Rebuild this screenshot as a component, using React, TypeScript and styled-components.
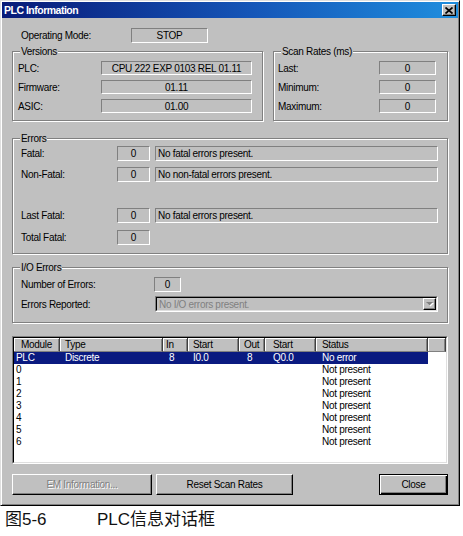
import React from 'react';
import styled, { createGlobalStyle, css } from 'styled-components';

const GlobalStyle = createGlobalStyle`
  html, body {
    margin: 0;
    padding: 0;
    background: #fff;
  }
`;

const raised = css`
  box-sizing: border-box;
  background: #c0c0c0;
  border: 1px solid;
  border-color: #fff #000 #000 #fff;
  box-shadow: inset -1px -1px #808080;
`;

const Page = styled.div`
  display: flex;
  flex-direction: column;
  width: 463px;
`;

const Window = styled.div`
  box-sizing: border-box;
  width: 460px;
  height: 506px;
  padding: 1px;
  display: flex;
  flex-direction: column;
  background: #c0c0c0;
  border: 1px solid;
  border-color: #dfdfdf #000 #000 #dfdfdf;
  box-shadow: inset 1px 1px #fff, inset -1px -1px #808080;
  font-family: "Liberation Sans", Arial, sans-serif;
  font-size: 10px;
  letter-spacing: -0.3px;
  color: #000;
`;

const TitleBar = styled.div`
  flex: none;
  height: 16px;
  display: flex;
  align-items: center;
  justify-content: space-between;
  padding: 0 2px 0 2px;
  background: linear-gradient(90deg, #081a78 0%, #1556b8 55%, #1f8ede 100%);
`;

const TitleText = styled.span`
  color: #fff;
  font-weight: bold;
  font-size: 10.5px;
  letter-spacing: -0.5px;
`;

const TitleClose = styled.div`
  ${raised};
  width: 14px;
  height: 12px;
  display: flex;
  align-items: center;
  justify-content: center;
`;

const Body = styled.div`
  flex: 1;
  display: flex;
  flex-direction: column;
  padding: 0 10px;
`;

const Row = styled.div<{ $top: number; $h?: number }>`
  display: flex;
  align-items: center;
  margin-top: ${(p) => p.$top}px;
  height: ${(p) => p.$h ?? 15}px;
`;

const Label = styled.div<{ $w: number; $pl: number }>`
  flex: none;
  box-sizing: border-box;
  width: ${(p) => p.$w}px;
  padding-left: ${(p) => p.$pl}px;
  white-space: nowrap;
`;

const Field = styled.div<{ $w: number; $left?: boolean; $ml?: number }>`
  flex: none;
  box-sizing: border-box;
  width: ${(p) => p.$w}px;
  height: 100%;
  margin-left: ${(p) => p.$ml ?? 0}px;
  padding: 0 2px;
  display: flex;
  align-items: center;
  justify-content: ${(p) => (p.$left ? 'flex-start' : 'center')};
  border: 1px solid;
  border-color: #808080 #fff #fff #808080;
  white-space: nowrap;
  overflow: hidden;
`;

const TopRow = styled.div`
  display: flex;
  gap: 10px;
  margin-top: 8px;
`;

const Group = styled.div<{ $w?: number; $top?: number; $pb: number }>`
  box-sizing: border-box;
  flex: none;
  width: ${(p) => (p.$w ? `${p.$w}px` : '100%')};
  margin-top: ${(p) => p.$top ?? 0}px;
  padding-bottom: ${(p) => p.$pb}px;
  border: 1px solid #808080;
  box-shadow: inset 1px 1px #fff, 1px 1px #fff;
`;

const GroupTitle = styled.div`
  width: fit-content;
  height: 13px;
  line-height: 13px;
  margin: -7px 0 0 7px;
  padding: 0 1px;
  background: #c0c0c0;
`;

const Combo = styled.div`
  flex: none;
  box-sizing: border-box;
  width: 283px;
  height: 100%;
  margin-left: 1px;
  border: 1px solid;
  border-color: #808080 #fff #fff #808080;
`;

const ComboInner = styled.div`
  box-sizing: border-box;
  height: 100%;
  display: flex;
  align-items: center;
  border: 1px solid;
  border-color: #000 #dfdfdf #dfdfdf #000;
  color: #808080;
`;

const ComboText = styled.span`
  flex: 1;
  padding-left: 2px;
`;

const DropButton = styled.div`
  ${raised};
  width: 13px;
  height: 12px;
  display: flex;
  align-items: center;
  justify-content: center;
`;

const ListFrame = styled.div`
  box-sizing: border-box;
  height: 128px;
  margin-top: 13px;
  border: 1px solid;
  border-color: #808080 #fff #fff #808080;
`;

const ListInner = styled.div`
  box-sizing: border-box;
  height: 100%;
  background: #fff;
  border: 1px solid;
  border-color: #000 #dfdfdf #dfdfdf #000;
  overflow: hidden;
`;

const cols = '46px 103px 25px 51px 26px 51px 112px 1fr';

const HeaderRow = styled.div`
  display: grid;
  grid-template-columns: ${cols};
  height: 14px;
`;

const HeaderCell = styled.div<{ $pl: number }>`
  box-sizing: border-box;
  height: 14px;
  line-height: 13px;
  padding-left: ${(p) => p.$pl}px;
  background: #c0c0c0;
  border-right: 1px solid #404040;
  border-bottom: 1px solid #808080;
  box-shadow: inset 1px 1px #fff, inset -1px 0 #808080;
  white-space: nowrap;
`;

const DataRow = styled.div`
  display: grid;
  grid-template-columns: ${cols};
  height: 12px;
  line-height: 12px;
`;

const Cell = styled.div<{ $sel?: boolean; $pl: number }>`
  padding-left: ${(p) => p.$pl}px;
  white-space: nowrap;
  overflow: hidden;
  background: ${(p) => (p.$sel ? '#0a1a80' : 'transparent')};
  color: ${(p) => (p.$sel ? '#fff' : '#000')};
`;

const ButtonRow = styled.div`
  display: flex;
  gap: 4px;
  margin-top: 10px;
`;

const Button = styled.button<{ $w: number; $default?: boolean }>`
  ${raised};
  width: ${(p) => p.$w}px;
  height: 21px;
  padding: 0;
  font: inherit;
  letter-spacing: inherit;
  color: #000;
  margin-left: ${(p) => (p.$default ? 'auto' : '0')};
  &:disabled {
    color: #808080;
    text-shadow: 1px 1px #fff;
  }
  ${(p) =>
    p.$default &&
    css`
      border-color: #000;
      box-shadow: inset 1px 1px #fff, inset -1px -1px #000, inset -2px -2px #808080;
    `}
`;

const Figure = styled.div`
  display: flex;
  margin-top: 4px;
  padding-left: 5px;
  font-family: "Liberation Sans", "Noto Sans CJK SC", sans-serif;
  font-size: 17px;
  line-height: 20px;
  color: #111;
`;

const FigureNo = styled.span`
  width: 92px;
`;

const columns = [
  { title: 'Module', hp: 7, rp: 2 },
  { title: 'Type', hp: 5, rp: 5 },
  { title: 'In', hp: 3, rp: 6 },
  { title: 'Start', hp: 5, rp: 5 },
  { title: 'Out', hp: 5, rp: 8 },
  { title: 'Start', hp: 8, rp: 8 },
  { title: 'Status', hp: 6, rp: 6 },
  { title: '', hp: 0, rp: 0 },
];

const modules: { cells: string[]; sel?: boolean }[] = [
  { cells: ['PLC', 'Discrete', '8', 'I0.0', '8', 'Q0.0', 'No error'], sel: true },
  ...['0', '1', '2', '3', '4', '5', '6'].map((m) => ({
    cells: [m, '', '', '', '', '', 'Not present'],
  })),
];

const CloseGlyph = () => (
  <svg width="8" height="7" viewBox="0 0 8 7">
    <path d="M0.5 0.5 L7.5 6.5 M7.5 0.5 L0.5 6.5" stroke="#000" strokeWidth="1.7" />
  </svg>
);

const DownArrow = () => (
  <svg width="8" height="5" viewBox="0 0 8 5">
    <polygon points="1,1 8,1 4.5,4.5" fill="#fff" />
    <polygon points="0,0 7,0 3.5,3.5" fill="#808080" />
  </svg>
);

const App = () => {
  return (
    <Page>
      <GlobalStyle />
      <Window>
        <TitleBar>
          <TitleText>PLC Information</TitleText>
          <TitleClose>
            <CloseGlyph />
          </TitleClose>
        </TitleBar>
        <Body>
          <Row $top={10}>
            <Label $w={119} $pl={9}>Operating Mode:</Label>
            <Field $w={77}>STOP</Field>
          </Row>

          <TopRow>
            <Group $w={251} $pb={7}>
              <GroupTitle>Versions</GroupTitle>
              <Row $top={3} $h={14}>
                <Label $w={88} $pl={5}>PLC:</Label>
                <Field $w={151}>CPU 222 EXP 0103 REL 01.11</Field>
              </Row>
              <Row $top={5} $h={14}>
                <Label $w={88} $pl={5}>Firmware:</Label>
                <Field $w={151}>01.11</Field>
              </Row>
              <Row $top={5} $h={14}>
                <Label $w={88} $pl={5}>ASIC:</Label>
                <Field $w={151}>01.00</Field>
              </Row>
            </Group>
            <Group $w={175} $pb={7}>
              <GroupTitle>Scan Rates (ms)</GroupTitle>
              <Row $top={3} $h={14}>
                <Label $w={105} $pl={4}>Last:</Label>
                <Field $w={57}>0</Field>
              </Row>
              <Row $top={5} $h={14}>
                <Label $w={105} $pl={4}>Minimum:</Label>
                <Field $w={57}>0</Field>
              </Row>
              <Row $top={5} $h={14}>
                <Label $w={105} $pl={4}>Maximum:</Label>
                <Field $w={57}>0</Field>
              </Row>
            </Group>
          </TopRow>

          <Group $top={17} $pb={8}>
            <GroupTitle>Errors</GroupTitle>
            <Row $top={1}>
              <Label $w={104} $pl={8}>Fatal:</Label>
              <Field $w={33}>0</Field>
              <Field $w={283} $ml={5} $left>No fatal errors present.</Field>
            </Row>
            <Row $top={6}>
              <Label $w={104} $pl={8}>Non-Fatal:</Label>
              <Field $w={33}>0</Field>
              <Field $w={283} $ml={5} $left>No non-fatal errors present.</Field>
            </Row>
            <Row $top={26}>
              <Label $w={104} $pl={8}>Last Fatal:</Label>
              <Field $w={33}>0</Field>
              <Field $w={283} $ml={5} $left>No fatal errors present.</Field>
            </Row>
            <Row $top={7}>
              <Label $w={104} $pl={8}>Total Fatal:</Label>
              <Field $w={33}>0</Field>
            </Row>
          </Group>

          <Group $top={13} $pb={10}>
            <GroupTitle>I/O Errors</GroupTitle>
            <Row $top={3}>
              <Label $w={141} $pl={8}>Number of Errors:</Label>
              <Field $w={27}>0</Field>
            </Row>
            <Row $top={4} $h={16}>
              <Label $w={141} $pl={8}>Errors Reported:</Label>
              <Combo>
                <ComboInner>
                  <ComboText>No I/O errors present.</ComboText>
                  <DropButton>
                    <DownArrow />
                  </DropButton>
                </ComboInner>
              </Combo>
            </Row>
          </Group>

          <ListFrame>
            <ListInner>
              <HeaderRow>
                {columns.map((c, i) => (
                  <HeaderCell key={i} $pl={c.hp}>
                    {c.title}
                  </HeaderCell>
                ))}
              </HeaderRow>
              {modules.map((m, r) => (
                <DataRow key={r}>
                  {columns.map((c, i) => (
                    <Cell key={i} $pl={c.rp} $sel={m.sel && i < 7}>
                      {m.cells[i] ?? ''}
                    </Cell>
                  ))}
                </DataRow>
              ))}
            </ListInner>
          </ListFrame>

          <ButtonRow>
            <Button $w={140} disabled>
              EM Information...
            </Button>
            <Button $w={137}>Reset Scan Rates</Button>
            <Button $w={69} $default>
              Close
            </Button>
          </ButtonRow>
        </Body>
      </Window>
      <Figure>
        <FigureNo>图5-6</FigureNo>
        <span>PLC信息对话框</span>
      </Figure>
    </Page>
  );
};

export default App;
